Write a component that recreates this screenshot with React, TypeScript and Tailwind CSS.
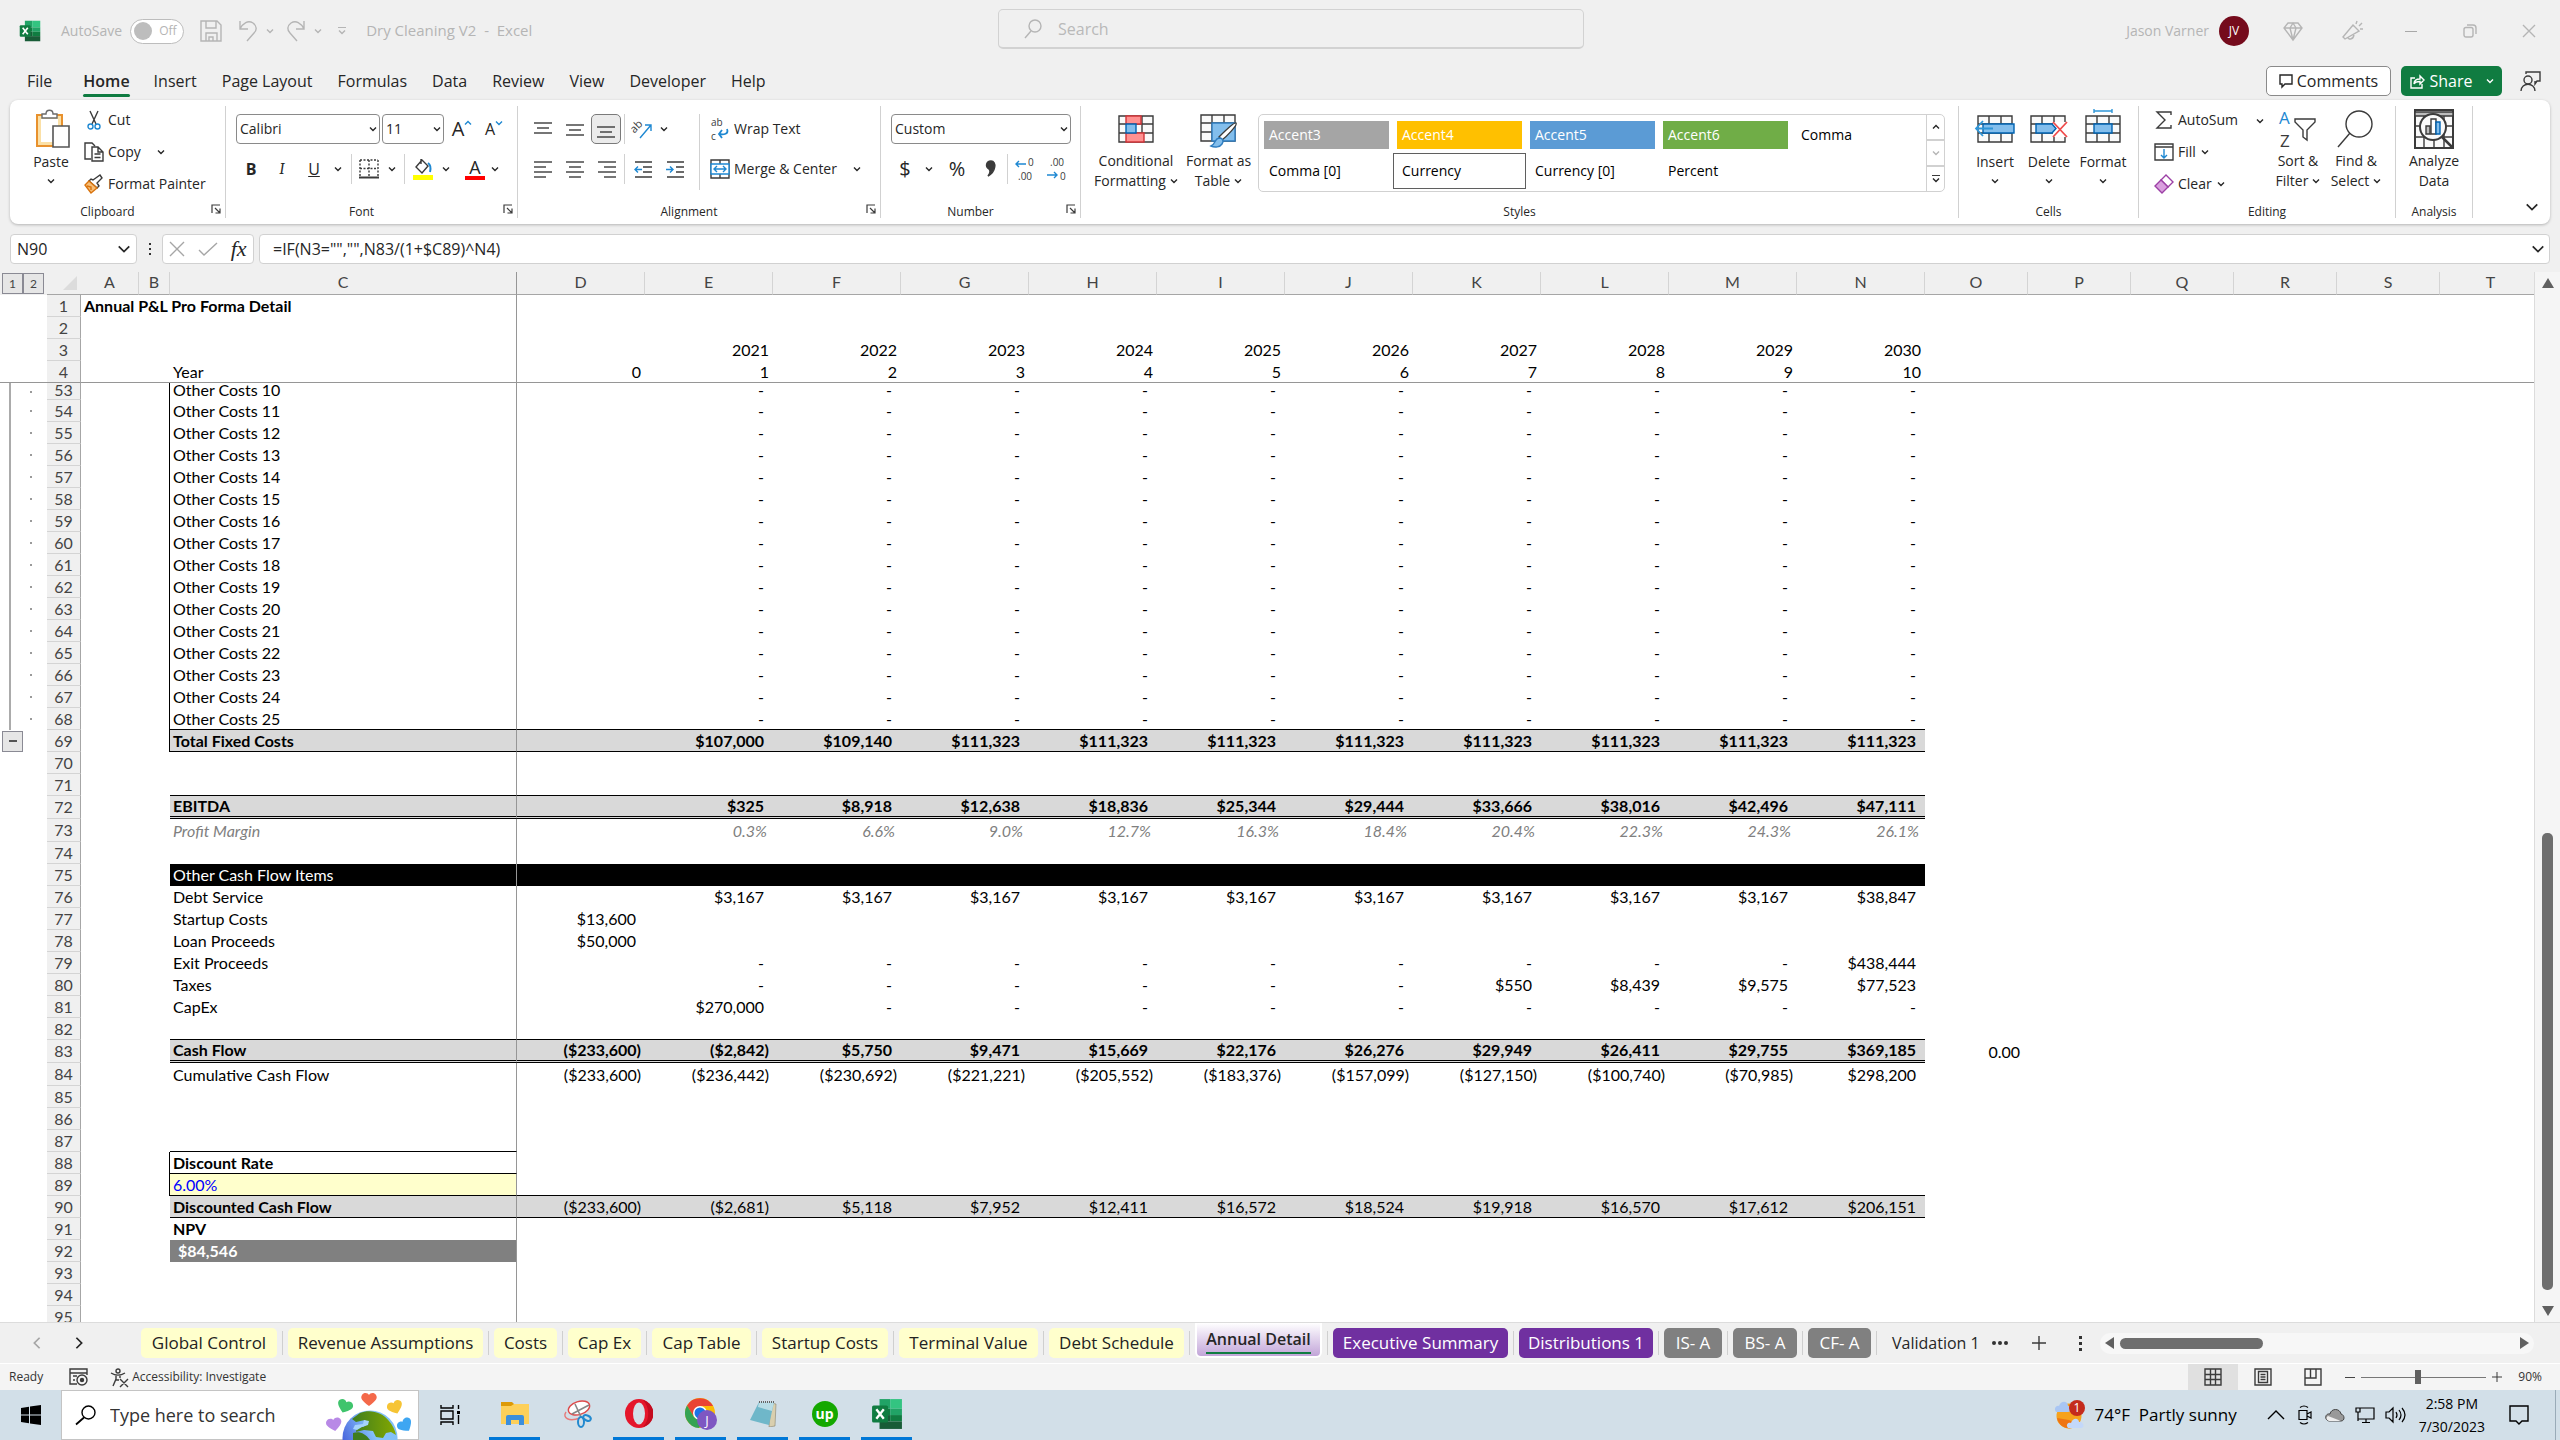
import type { ReactNode } from "react";
import clsx from "clsx";

const years = ["2021", "2022", "2023", "2024", "2025", "2026", "2027", "2028", "2029", "2030"];
const dashes = Array<string>(10).fill("-");

type Kind = "plain" | "total" | "double" | "section" | "margin" | "discounted";

interface SheetRow {
  n: number;
  label?: string;
  values?: string[];
  kind?: Kind;
}

// values are listed for columns D to N
const frozenRows: SheetRow[] = [
  { n: 1 },
  { n: 2 },
  { n: 3, values: ["", ...years] },
  { n: 4, label: "Year", values: ["0", "1", "2", "3", "4", "5", "6", "7", "8", "9", "10"] },
];

const bodyRows: SheetRow[] = [
  ...Array.from({ length: 16 }, (_, i) => ({
    n: 53 + i,
    label: `Other Costs ${10 + i}`,
    values: ["", ...dashes],
  })),
  {
    n: 69,
    label: "Total Fixed Costs",
    kind: "total",
    values: ["", "$107,000", "$109,140", "$111,323", "$111,323", "$111,323", "$111,323", "$111,323", "$111,323", "$111,323", "$111,323"],
  },
  { n: 70 },
  { n: 71 },
  {
    n: 72,
    label: "EBITDA",
    kind: "double",
    values: ["", "$325", "$8,918", "$12,638", "$18,836", "$25,344", "$29,444", "$33,666", "$38,016", "$42,496", "$47,111"],
  },
  {
    n: 73,
    label: "Profit Margin",
    kind: "margin",
    values: ["", "0.3%", "6.6%", "9.0%", "12.7%", "16.3%", "18.4%", "20.4%", "22.3%", "24.3%", "26.1%"],
  },
  { n: 74 },
  { n: 75, label: "Other Cash Flow Items", kind: "section" },
  {
    n: 76,
    label: "Debt Service",
    values: ["", "$3,167", "$3,167", "$3,167", "$3,167", "$3,167", "$3,167", "$3,167", "$3,167", "$3,167", "$38,847"],
  },
  { n: 77, label: "Startup Costs", values: ["$13,600"] },
  { n: 78, label: "Loan Proceeds", values: ["$50,000"] },
  { n: 79, label: "Exit Proceeds", values: ["", ...dashes.slice(1), "$438,444"] },
  { n: 80, label: "Taxes", values: ["", "-", "-", "-", "-", "-", "-", "$550", "$8,439", "$9,575", "$77,523"] },
  { n: 81, label: "CapEx", values: ["", "$270,000", ...dashes.slice(1)] },
  { n: 82 },
  {
    n: 83,
    label: "Cash Flow",
    kind: "double",
    values: ["($233,600)", "($2,842)", "$5,750", "$9,471", "$15,669", "$22,176", "$26,276", "$29,949", "$26,411", "$29,755", "$369,185", "0.00"],
  },
  {
    n: 84,
    label: "Cumulative Cash Flow",
    values: ["($233,600)", "($236,442)", "($230,692)", "($221,221)", "($205,552)", "($183,376)", "($157,099)", "($127,150)", "($100,740)", "($70,985)", "$298,200"],
  },
  { n: 85 },
  { n: 86 },
  { n: 87 },
  { n: 88, label: "Discount Rate" },
  { n: 89, label: "6.00%" },
  {
    n: 90,
    label: "Discounted Cash Flow",
    kind: "discounted",
    values: ["($233,600)", "($2,681)", "$5,118", "$7,952", "$12,411", "$16,572", "$18,524", "$19,918", "$16,570", "$17,612", "$206,151"],
  },
  { n: 91, label: "NPV" },
  { n: 92, label: "$84,546" },
  { n: 93 },
  { n: 94 },
  { n: 95 },
];

const Chevron = ({ size = 8, className = "" }: { size?: number; className?: string }) => (
  <svg width={size} height={size} viewBox="0 0 8 8" fill="none" stroke="currentColor" strokeWidth={size > 8 ? 1 : 1.4} className={clsx("shrink-0", className)}>
    <path d="M1 2.5 4 5.5 7 2.5" />
  </svg>
);

const Svg = ({ w, h, children, className }: { w: number; h: number; children: ReactNode; className?: string }) => (
  <svg width={w} height={h} viewBox={`0 0 ${w} ${h}`} fill="none" stroke="#3b3b3b" strokeWidth="1.4" className={clsx("shrink-0 overflow-visible", className)}>
    {children}
  </svg>
);

const ExcelIcon = ({ size }: { size: number }) => (
  <svg width={size} height={size} viewBox="0 0 30 30" className="shrink-0">
    <path d="M8 1h10v9H8z" fill="#21a366" />
    <path d="M18 1h11v9H18z" fill="#33c481" />
    <path d="M8 10h10v6H8z" fill="#107c41" />
    <path d="M18 10h11v6H18z" fill="#21a366" />
    <path d="M8 16h10v6H8z" fill="#185c37" />
    <path d="M18 16h11v6H18z" fill="#107c41" />
    <path d="M8 22h21v7H8z" fill="#185c37" />
    <rect x="1" y="7" width="15" height="16" rx="1.5" fill="#107c41" />
    <path d="m5 10.500 7 9M12 10.500l-7 9" stroke="#fff" strokeWidth="2.200" />
  </svg>
);

const Launcher = ({ label }: { label: string }) => (
  <button aria-label={label} className="absolute right-1 bottom-1">
    <Svg w={10} h={10}>
      <path d="M1 9V1h8M4 4l5 5M9 4.500V9H4.500" strokeWidth="1.200" />
    </Svg>
  </button>
);

const Group = ({ title, className, children, launcher }: { title: string; className: string; children: ReactNode; launcher?: boolean }) => (
  <section aria-label={title} className={clsx("relative flex h-[112px] shrink-0 flex-col border-r border-[#d1d1d1]", className)}>
    <div className="flex h-24 items-start">{children}</div>
    <div className={clsx("h-4 text-center text-xs leading-[20px]", launcher && "pr-5")}>{title}</div>
    {launcher && <Launcher label={`${title} settings`} />}
  </section>
);

const IconButton = ({ label, className = "w-8", children }: { label: string; className?: string; children: ReactNode }) => (
  <button aria-label={label} className={clsx("flex h-[30px] shrink-0 items-center justify-center", className)}>
    {children}
  </button>
);

const Divider = ({ className = "h-[30px]" }: { className?: string }) => <span className={clsx("w-px shrink-0 bg-[#d1d1d1]", className)} />;

const TextButton = ({ icon, label, chevron, className = "" }: { icon: ReactNode; label: string; chevron?: boolean; className?: string }) => (
  <button className={clsx("flex items-center gap-[5px] text-sm whitespace-nowrap", className)}>
    <span className="flex w-[18px] shrink-0 justify-center">{icon}</span>
    {label}
    {chevron && <Chevron />}
  </button>
);

const BigButton = ({ icon, lines, chevron, className }: { icon: ReactNode; lines: string[]; chevron?: "inline" | "below"; className: string }) => (
  <button className={clsx("flex shrink-0 flex-col items-center text-sm leading-[20px] whitespace-nowrap", className)}>
    <span className="flex h-[45px] items-center">{icon}</span>
    {lines.map((line, i) => (
      <span key={line} className={clsx("flex items-center gap-1", chevron === "below" && "pt-px")}>
        {line}
        {chevron === "inline" && i === lines.length - 1 && <Chevron />}
      </span>
    ))}
    {chevron === "below" && <Chevron className="mt-[5px]" />}
  </button>
);

const Select = ({ label, value, className }: { label: string; value: string; className: string }) => (
  <div className={clsx("relative h-[30px] shrink-0", className)}>
    <select aria-label={label} className="h-full w-full appearance-none rounded-[4px] border border-[#8a8a8a] bg-white pl-[3px] text-sm">
      <option>{value}</option>
    </select>
    <Chevron className="pointer-events-none absolute top-[11px] right-[3px]" />
  </div>
);

const Lines = ({ rows }: { rows: [number, number, number][] }) => (
  <Svg w={18} h={18}>
    {rows.map(([x1, x2, y]) => (
      <path key={y} d={`M${x1} ${y}H${x2}`} />
    ))}
  </Svg>
);

const GridBase = () => (
  <g>
    <path d="M1 1h34v26H1z" fill="#fafafa" />
    <path d="M12 1v26M24 1v26M1 9h34M1 18h34" />
  </g>
);

const TitleBar = () => (
  <header className="flex h-[62px] shrink-0 items-center text-[#b5b5b5]">
    <div className="flex flex-[979] basis-0 items-center gap-3 pl-[19px] text-sm">
      <ExcelIcon size={22} />
      <label className="ml-2 flex items-center gap-2">
        AutoSave
        <button role="switch" aria-checked="false" aria-label="AutoSave" className="flex h-[25px] w-[54px] items-center gap-[7px] rounded-full border border-[#bdbdbd] bg-white pl-[3px] text-xs">
          <span className="size-[18px] rounded-full bg-[#bdbdbd]" />
          Off
        </button>
      </label>
      <button aria-label="Save" className="ml-1">
        <Svg w={22} h={22}>
          <g stroke="#b5b5b5">
            <path d="M1 1h16l4 4v16H1zM6 1v7h10V1M6 21v-8h11v8M9 21v-4h4v4" />
          </g>
        </Svg>
      </button>
      <button aria-label="Undo" className="ml-1 flex items-center gap-2">
        <Svg w={20} h={22}>
          <path d="M2 1v8h8M2 9C5 3 10 0 15 3c4 3 4 7 1 10l-7 8" stroke="#b5b5b5" />
        </Svg>
        <Chevron />
      </button>
      <button aria-label="Redo" className="flex items-center gap-2">
        <Svg w={20} h={22}>
          <path d="M18 1v8h-8M18 9C15 3 10 0 5 3 1 6 1 10 4 13l7 8" stroke="#b5b5b5" />
        </Svg>
        <Chevron />
      </button>
      <button aria-label="Customize Quick Access Toolbar" className="ml-1 flex flex-col items-center">
        <span className="h-px w-2 bg-[#b5b5b5]" />
        <Chevron />
      </button>
      <span className="ml-2 text-[15px] whitespace-pre">Dry Cleaning V2  -  Excel</span>
    </div>
    <label className="mb-1 flex h-10 w-[586px] shrink-0 items-center gap-4 rounded-[5px] border border-b-2 border-[#d2d2d2] pl-[25px]">
      <Svg w={18} h={20}>
        <circle cx="11" cy="7" r="6" stroke="#b5b5b5" />
        <path d="m7 12-6 7" stroke="#b5b5b5" />
      </Svg>
      <input type="search" placeholder="Search" aria-label="Search" className="flex-1 bg-transparent text-base placeholder:text-[#b9b9b9]" />
    </label>
    <div className="flex flex-[974] basis-0 items-center justify-end pr-[2px] text-sm">
      Jason Varner
      <span className="ml-[10px] mr-[14px] flex size-[30px] items-center justify-center rounded-full bg-[#750b1c] text-xs text-white">JV</span>
      <IconButton label="Premium" className="w-[59px]">
        <Svg w={20} h={20}>
          <path d="M5 2h10l4 5-9 12L1 7zM1 7h18M10 2 7 7l3 12 3-12z" stroke="#b5b5b5" />
        </Svg>
      </IconButton>
      <IconButton label="What's new" className="w-[59px]">
        <Svg w={22} h={22}>
          <path d="m12 5 6 6L4 19l-2-2zM7 17c0 3 5 3 6-2M15 4l1-3M18 6l3-3M19 9h3" stroke="#b5b5b5" />
        </Svg>
      </IconButton>
      <IconButton label="Minimize" className="w-[59px]">
        <span className="h-px w-3 bg-[#a8a8a8]" />
      </IconButton>
      <IconButton label="Restore" className="w-[59px]">
        <Svg w={14} h={14}>
          <rect x="1" y="3.500" width="9" height="9.500" rx="2" stroke="#b5b5b5" />
          <path d="M4 1h6q3 0 3 3v6" stroke="#b5b5b5" />
        </Svg>
      </IconButton>
      <IconButton label="Close" className="w-[59px]">
        <Svg w={14} h={14}>
          <path d="m1 1 12 12M13 1 1 13" stroke="#b5b5b5" />
        </Svg>
      </IconButton>
    </div>
  </header>
);

const menu = ["File", "Home", "Insert", "Page Layout", "Formulas", "Data", "Review", "View", "Developer", "Help"];

const MenuBar = () => (
  <nav className="flex h-[38px] shrink-0 items-center pl-[15px] pr-[19px] text-base">
    {menu.map((item) => (
      <button key={item} className={clsx("relative h-[38px] px-3", item === "File" ? "mr-[7px]" : item !== "Home" && "mr-px", item === "Home" && "font-semibold")}>
        {item}
        {item === "Home" && <span className="absolute bottom-[3px] left-3 right-3 h-[3px] rounded-full bg-[#0f7b41]" />}
      </button>
    ))}
    <button className="ml-auto flex h-[30px] w-[125px] items-center justify-center gap-1 rounded-[5px] border border-[#8a8a8a] bg-white">
      <Svg w={14} h={14}>
        <path d="M1 1h12v9H6l-3 3v-3H1z" stroke="#262626" />
      </Svg>
      Comments
    </button>
    <button className="ml-[10px] flex h-[30px] w-[101px] items-center justify-center gap-[5px] rounded-[5px] bg-[#107c41] font-medium text-white">
      <Svg w={15} h={15}>
        <path d="M5 4H1v10h11v-4M4 10c0-4 3-5 6-5V2l4 4-4 4V7.500C7 7.500 5 8 4 10z" stroke="#fff" />
      </Svg>
      Share
      <Chevron className="ml-2" />
    </button>
    <button aria-label="Presence" className="ml-[18px]">
      <Svg w={21} h={21}>
        <circle cx="8" cy="9" r="4" />
        <path d="M1 20c0-9 14-9 14 0M6 3V1h14v9h-3l-2 3v-3" />
      </Svg>
    </button>
  </nav>
);

const ClipboardGroup = () => (
  <Group title="Clipboard" className="w-[216px]" launcher>
    <BigButton
      className="w-[75px] pl-[7px]"
      chevron="below"
      lines={["Paste"]}
      icon={
        <Svg w={36} h={40} className="ml-[3px]">
          <path d="M2 6h25v31H2z" fill="#fbe0a6" stroke="#e8912d" strokeWidth="2" />
          <path d="M6 10h17v23H6z" fill="#fff" stroke="none" />
          <path d="M7 9V5h4c0-5 7-5 7 0h4v4z" fill="#fff" stroke="#6b6b6b" />
          <path d="M18 17h16v21H18z" fill="#fff" stroke="#555" strokeWidth="1.600" />
        </Svg>
      }
    />
    <div className="flex flex-col">
      <TextButton
        className="h-8 -mt-[2px]"
        label="Cut"
        icon={
          <Svg w={14} h={20}>
            <path d="m3 1 6 13M11 1 5 14" />
            <circle cx="3.500" cy="16.500" r="2.500" stroke="#1e88d2" />
            <circle cx="10.500" cy="16.500" r="2.500" stroke="#1e88d2" />
          </Svg>
        }
      />
      <div className="flex items-center gap-4">
        <TextButton
          className="h-8"
          label="Copy"
          icon={
            <Svg w={20} h={20}>
              <path d="M7 17H1V1h7l3 3" />
              <path d="M8 5h6l5 5v9H8zM14 5v5h5M10.500 12h6M10.500 15.500h6" />
            </Svg>
          }
        />
        <Chevron />
      </div>
      <TextButton
        className="h-8"
        label="Format Painter"
        icon={
          <Svg w={20} h={20}>
            <path d="m9 6 7-5 2 3-5 5 2 3-2 2-8-7 2-2z" />
            <path d="m5 7 8 7-6 5-6-8z" fill="#f6bd76" stroke="#d9730d" />
            <path d="m3 12 4 1 0 3" stroke="#d9730d" />
          </Svg>
        }
      />
    </div>
  </Group>
);

const FontGroup = () => (
  <Group title="Font" className="w-[292px]" launcher>
    <div className="flex flex-col gap-[10px] pt-2 pl-[10px]">
      <div className="flex items-center">
        <Select label="Font name" value="Calibri" className="w-[144px]" />
        <Select label="Font size" value="11" className="ml-[2px] w-[62px]" />
        <IconButton label="Increase font size" className="ml-[2px] w-8">
          <span className="text-xl leading-none">A</span>
          <Chevron className="mb-3 rotate-180 text-[#1e88d2]" />
        </IconButton>
        <IconButton label="Decrease font size">
          <span className="text-base leading-none">A</span>
          <Chevron className="mb-3 text-[#1e88d2]" />
        </IconButton>
      </div>
      <div className="flex items-center text-base">
        <IconButton label="Bold" className="w-[30px]">
          <b>B</b>
        </IconButton>
        <IconButton label="Italic">
          <i className="font-serif">I</i>
        </IconButton>
        <IconButton label="Underline">
          <u>U</u>
        </IconButton>
        <Chevron className="mx-1" />
        <Divider className="ml-[5px] h-[30px]" />
        <IconButton label="Borders" className="ml-[3px] w-7">
          <Svg w={20} h={20}>
            <path d="M1 1h18M1 1v16M19 1v16M10 1v16M1 9.500h18" strokeDasharray="2 1.500" />
            <path d="M0 18.500h20" strokeWidth="2" />
          </Svg>
        </IconButton>
        <Chevron className="mx-[5px]" />
        <Divider className="ml-[3px] h-[30px]" />
        <IconButton label="Fill color" className="ml-1 w-7">
          <Svg w={20} h={22}>
            <path d="m3 9 6-7 6 6-6 7zM8 1v5" />
            <path d="M15 5c3 2 3 5 2 9" stroke="#1e88d2" strokeWidth="2" />
            <path d="M0 17h20v5H0z" fill="#ff0" stroke="none" />
          </Svg>
        </IconButton>
        <Chevron className="mx-[5px]" />
        <IconButton label="Font color" className="ml-1 w-8">
          <span className="flex flex-col items-center">
            <span className="text-lg leading-[18px]">A</span>
            <span className="h-1 w-5 bg-[#f00]" />
          </span>
        </IconButton>
        <Chevron />
      </div>
    </div>
  </Group>
);

const AlignmentGroup = () => (
  <Group title="Alignment" className="w-[363px]" launcher>
    <div className="flex flex-col gap-[10px] pt-2 pl-[9px]">
      <div className="flex items-center">
        <IconButton label="Top align">
          <Lines rows={[[0, 18, 3], [3, 15, 8], [0, 18, 13]]} />
        </IconButton>
        <IconButton label="Middle align">
          <Lines rows={[[0, 18, 5], [3, 15, 10], [0, 18, 15]]} />
        </IconButton>
        <IconButton label="Bottom align" className="w-[30px] rounded-[5px] border border-[#7a7a7a] bg-[#ebebeb]">
          <Lines rows={[[0, 18, 7], [3, 15, 12], [0, 18, 17]]} />
        </IconButton>
        <Divider className="ml-[3px] h-[30px]" />
        <IconButton label="Orientation" className="ml-[3px] w-7">
          <Svg w={22} h={22}>
            <text x="0" y="12" fontSize="11" fill="#3b3b3b" stroke="none" transform="rotate(-45 6 10)">ab</text>
            <path d="M9 20 20 7M14 7h6v6" stroke="#1e88d2" />
          </Svg>
        </IconButton>
        <Chevron className="mx-1" />
      </div>
      <div className="flex items-center">
        <IconButton label="Align left">
          <Lines rows={[[0, 18, 2], [0, 12, 7], [0, 18, 12], [0, 12, 17]]} />
        </IconButton>
        <IconButton label="Center">
          <Lines rows={[[0, 18, 2], [3, 15, 7], [0, 18, 12], [3, 15, 17]]} />
        </IconButton>
        <IconButton label="Align right">
          <Lines rows={[[0, 18, 2], [6, 18, 7], [0, 18, 12], [6, 18, 17]]} />
        </IconButton>
        <Divider className="ml-px h-[30px]" />
        <IconButton label="Decrease indent" className="ml-[2px] w-8">
          <Svg w={18} h={18}>
            <path d="M1 2h17M9 7h9M9 12h9M1 17h17" />
            <path d="M8 9.500H1M4 6.500 1 9.500l3 3" stroke="#1e88d2" />
          </Svg>
        </IconButton>
        <IconButton label="Increase indent">
          <Svg w={18} h={18}>
            <path d="M1 2h17M10 7h8M10 12h8M1 17h17" />
            <path d="M0 9.500h7M4 6.500l3 3-3 3" stroke="#1e88d2" />
          </Svg>
        </IconButton>
      </div>
    </div>
    <Divider className="mt-2 ml-2 h-[76px]" />
    <div className="flex flex-col gap-[10px] pt-2 pl-[11px]">
      <TextButton
        className="h-[30px]"
        label="Wrap Text"
        icon={
          <Svg w={18} h={22}>
            <text x="0" y="8" fontSize="10" fill="#3b3b3b" stroke="none">ab</text>
            <text x="0" y="22" fontSize="10" fill="#3b3b3b" stroke="none">c</text>
            <path d="M16 11c2 5-3 6-8 5M11 12l-3 4 3 4" stroke="#1e88d2" strokeWidth="1.800" />
          </Svg>
        }
      />
      <div className="flex items-center gap-4">
        <TextButton
          className="h-[30px]"
          label="Merge & Center"
          icon={
            <Svg w={20} h={20}>
              <path d="M1 1h18v18H1zM10 1v4M10 15v4" />
              <path d="M1 5h18v10H1z" fill="#fff" stroke="#1e88d2" />
              <path d="M4 10h12M7 7l-3 3 3 3M13 7l3 3-3 3" stroke="#1e88d2" />
            </Svg>
          }
        />
        <Chevron />
      </div>
    </div>
  </Group>
);

const NumberGroup = () => (
  <Group title="Number" className="w-[200px]" launcher>
    <div className="flex flex-col gap-[10px] pt-2 pl-[10px]">
      <Select label="Number format" value="Custom" className="w-[180px]" />
      <div className="flex items-center text-xl">
        <IconButton label="Accounting format" className="w-7">$</IconButton>
        <Chevron className="mx-[6px]" />
        <IconButton label="Percent style" className="ml-[2px] w-8">%</IconButton>
        <IconButton label="Comma style" className="ml-1 w-7">
          <Svg w={10} h={18}>
            <path d="M5 1c6 0 5 11-3 15 3-4 2-6 1-7-4-2-3-8 2-8z" fill="#3b3b3b" />
          </Svg>
        </IconButton>
        <Divider className="ml-[2px] h-[30px]" />
        <IconButton label="Increase decimal" className="ml-px w-8">
          <Svg w={20} h={22}>
            <text x="13" y="8" fontSize="10" fill="#3b3b3b" stroke="none">0</text>
            <text x="3" y="22" fontSize="10" fill="#3b3b3b" stroke="none">.00</text>
            <path d="M11 6H1M4 3 1 6l3 3" stroke="#1e88d2" />
          </Svg>
        </IconButton>
        <IconButton label="Decrease decimal">
          <Svg w={20} h={22}>
            <text x="3" y="8" fontSize="10" fill="#3b3b3b" stroke="none">.00</text>
            <text x="13" y="22" fontSize="10" fill="#3b3b3b" stroke="none">0</text>
            <path d="M0 17h10M7 14l3 3-3 3" stroke="#1e88d2" />
          </Svg>
        </IconButton>
      </div>
    </div>
  </Group>
);

const cellStyles = [
  { name: "Accent3", className: "bg-[#a5a5a5] text-white" },
  { name: "Accent4", className: "bg-[#ffc000] text-white" },
  { name: "Accent5", className: "bg-[#5b9bd5] text-white" },
  { name: "Accent6", className: "bg-[#70ad47] text-white" },
  { name: "Comma", className: "text-black" },
  { name: "Comma [0]", className: "text-black" },
  { name: "Currency", className: "text-black outline outline-[#5f5f5f] outline-offset-3" },
  { name: "Currency [0]", className: "text-black" },
  { name: "Percent", className: "text-black" },
];

const StylesGroup = () => (
  <Group title="Styles" className="min-w-[878px] flex-1">
    <BigButton
      className="ml-3 w-[86px]"
      chevron="inline"
      lines={["Conditional", "Formatting"]}
      icon={
        <Svg w={36} h={28}>
          <GridBase />
          <path d="M8 1h15v8H8zM8 18h18v9H8z" fill="#ff9191" stroke="#d13438" />
          <path d="M8 9h10v9H8z" fill="#83beec" stroke="#0063b1" />
        </Svg>
      }
    />
    <BigButton
      className="w-[79px]"
      chevron="inline"
      lines={["Format as", "Table"]}
      icon={
        <Svg w={38} h={34} className="mt-[5px]">
          <GridBase />
          <path d="M12 9h23v18H12z" fill="#83beec" stroke="#2f7dc0" />
          <path d="M36 9c2 2-10 14-14 17l-3-3C24 18 34 8 36 9z" fill="#fff" />
          <path d="M19 24c4 0 5 3 3 6s-7 4-11 2c5-2 3-7 8-8z" fill="#83beec" stroke="#2f7dc0" />
        </Svg>
      }
    />
    <div className="mt-2 flex h-[78px] flex-1 overflow-hidden rounded-[5px] border border-[#d1d1d1]">
      <div className="grid w-[662px] grid-cols-5 content-start gap-x-2 gap-y-2 py-[6px] pl-[5px]">
        {cellStyles.map((s) => (
          <button key={s.name} className={clsx("h-7 pl-[5px] text-left text-sm whitespace-nowrap", s.className)}>
            {s.name}
          </button>
        ))}
      </div>
      <div className="ml-auto flex w-[18px] flex-col divide-y-2 divide-[#d1d1d1] border-l border-[#d1d1d1]">
        <button aria-label="Previous styles" className="flex flex-1 items-center justify-center">
          <Chevron className="rotate-180" />
        </button>
        <button aria-label="Next styles" className="flex flex-1 items-center justify-center text-[#b5b5b5]">
          <Chevron />
        </button>
        <button aria-label="More styles" className="flex flex-1 flex-col items-center justify-center">
          <span className="h-px w-2 bg-[#3b3b3b]" />
          <Chevron />
        </button>
      </div>
    </div>
    <span className="w-[13px]" />
  </Group>
);

const CellsGroup = () => (
  <Group title="Cells" className="w-[180px]">
    <BigButton
      className="ml-[9px] w-[54px]"
      chevron="below"
      lines={["Insert"]}
      icon={
        <Svg w={40} h={28}>
          <g transform="translate(2 0)">
            <GridBase />
          </g>
          <path d="M8 9h31v9H8z" fill="#83beec" stroke="#0063b1" />
          <path d="M18 13.500H1M8 6l-7 7.500L8 21" stroke="#2f96d8" strokeWidth="1.800" />
        </Svg>
      }
    />
    <BigButton
      className="w-[54px]"
      chevron="below"
      lines={["Delete"]}
      icon={
        <Svg w={38} h={28}>
          <GridBase />
          <path d="M23 7h14v15H23z" fill="#fff" stroke="none" />
          <path d="M6 9h16l4 4.500-4 4.500H6z" fill="#83beec" stroke="#0063b1" />
          <path d="m23 7 14 15M37 7 23 22" stroke="#f04b4b" strokeWidth="1.800" />
        </Svg>
      }
    />
    <BigButton
      className="w-[54px]"
      chevron="below"
      lines={["Format"]}
      icon={
        <Svg w={36} h={34} className="mb-[6px]">
          <g transform="translate(0 6)">
            <GridBase />
            <path d="M9 9h18v9H9z" fill="#83beec" stroke="#0063b1" />
          </g>
          <path d="M9 2h18M9 0v4M27 0v4" stroke="#2f96d8" />
        </Svg>
      }
    />
  </Group>
);

const EditingGroup = () => (
  <Group title="Editing" className="w-[257px]">
    <div className="flex w-[130px] flex-col pr-[5px] pl-4">
      <div className="flex items-center justify-between">
        <TextButton
          className="h-8 -mt-[2px]"
          label="AutoSum"
          icon={
            <Svg w={16} h={18}>
              <path d="M15 4V1H1l8 8-8 8h14v-3" />
            </Svg>
          }
        />
        <Chevron />
      </div>
      <TextButton
        className="h-8"
        label="Fill"
        chevron
        icon={
          <Svg w={20} h={18}>
            <path d="M1 1h18v16H1zM1 4h18" />
            <path d="M10 6v9M7 12l3 3 3-3" stroke="#1e88d2" />
          </Svg>
        }
      />
      <TextButton
        className="h-8"
        label="Clear"
        chevron
        icon={
          <Svg w={20} h={20}>
            <path d="m12 1 7 7-5 5-7-7z" stroke="#9c3fa5" />
            <path d="m7 6 7 7-6 6-7-7z" fill="#d9a0de" stroke="#9c3fa5" />
          </Svg>
        }
      />
    </div>
    <BigButton
      className="w-[58px]"
      chevron="inline"
      lines={["Sort &", "Filter"]}
      icon={
        <Svg w={38} h={38}>
          <text x="0" y="14" fontSize="17" fill="#1e88d2" stroke="none">A</text>
          <text x="1" y="37" fontSize="17" fill="#3b3b3b" stroke="none">Z</text>
          <path d="M16 9h20v3l-8 8v10l-4-3v-7l-8-8z" />
        </Svg>
      }
    />
    <BigButton
      className="w-[58px]"
      chevron="inline"
      lines={["Find &", "Select"]}
      icon={
        <Svg w={38} h={38}>
          <circle cx="22" cy="14" r="13" />
          <path d="M13 23 1 37" />
        </Svg>
      }
    />
  </Group>
);

const AnalysisGroup = () => (
  <Group title="Analysis" className="w-[77px]">
    <BigButton
      className="w-[76px]"
      lines={["Analyze", "Data"]}
      icon={
        <Svg w={40} h={40}>
          <path d="M1 1h38v38H1z" fill="#fafafa" strokeWidth="2" />
          <path d="M1 3h38v4H1z" fill="#bdbdbd" />
          <path d="M1 17h38M1 28h38M10 7v32M20 28v11M30 7v32" />
          <circle cx="19" cy="18" r="13" fill="#fafafa" strokeWidth="2" />
          <path d="M12 17h4v8h-4z" fill="#bdbdbd" />
          <path d="M17 10h5v15h-5z" fill="#fff" />
          <path d="M22 13h4v12h-4z" fill="#83beec" stroke="#0063b1" />
          <path d="m28 28 11 11" strokeWidth="2.500" />
        </Svg>
      }
    />
  </Group>
);

const Ribbon = () => (
  <div className="relative mx-[10px] flex h-[124px] shrink-0 rounded-[8px] bg-white pt-[6px] shadow-[0_1px_3px_rgba(0,0,0,0.25)]">
    <ClipboardGroup />
    <FontGroup />
    <AlignmentGroup />
    <NumberGroup />
    <StylesGroup />
    <CellsGroup />
    <EditingGroup />
    <AnalysisGroup />
    <div className="flex w-[77px] shrink-0 items-end justify-end pr-[11px] pb-[10px]">
      <button aria-label="Collapse ribbon">
        <Chevron size={14} />
      </button>
    </div>
  </div>
);

const FormulaBar = () => (
  <div className="mx-[10px] mt-[10px] mb-2 flex h-[30px] shrink-0 items-center text-base">
    <div className="flex h-full w-[127px] items-center rounded-[4px] border border-[#d1d1d1] bg-white pr-[5px] pl-[6px]">
      <input aria-label="Name box" defaultValue="N90" className="min-w-0 flex-1" />
      <button aria-label="Name list">
        <Chevron size={14} />
      </button>
    </div>
    <span className="flex w-[25px] flex-col items-center gap-[3px]">
      <i className="size-[2px] bg-[#333]" />
      <i className="size-[2px] bg-[#333]" />
      <i className="size-[2px] bg-[#333]" />
    </span>
    <div className="flex h-full w-[92px] items-center justify-around rounded-[4px] border border-[#d1d1d1] bg-white">
      <button aria-label="Cancel">
        <Svg w={16} h={16}>
          <path d="m1 1 14 14M15 1 1 15" stroke="#a6a6a6" />
        </Svg>
      </button>
      <button aria-label="Enter">
        <Svg w={20} h={14}>
          <path d="m1 8 5 5L19 1" stroke="#a6a6a6" />
        </Svg>
      </button>
      <button aria-label="Insert function" className="font-['Liberation_Serif',serif] text-[22px] leading-none italic">
        fx
      </button>
    </div>
    <div className="ml-[5px] flex h-full flex-1 items-center rounded-[4px] border border-[#d1d1d1] bg-white pr-[4px] pl-[13px]">
      <input aria-label="Formula" defaultValue={'=IF(N3="","",N83/(1+$C89)^N4)'} className="flex-1" />
      <button aria-label="Expand formula bar">
        <Chevron size={14} />
      </button>
    </div>
  </div>
);

const wideColumns = ["D", "E", "F", "G", "H", "I", "J", "K", "L", "M", "N"];
const narrowColumns = ["O", "P", "Q", "R", "S", "T"];

const valuePadding = (row: SheetRow, value: string) => {
  if (row.n < 5 || value.endsWith(")")) return "pr-1";
  if (value.endsWith("%")) return "pr-[6px]";
  return "pr-[9px]";
};

// fill and bottom edge shared by columns C to N
const bandClass = (row: SheetRow) =>
  clsx(
    row.kind === "total" && "border-b border-b-black bg-[#d9d9d9] font-bold",
    row.kind === "double" && "border-b-3 border-double border-b-black bg-[#d9d9d9] font-bold",
    row.kind === "section" && "bg-black text-white",
    row.kind === "margin" && "text-[#808080] italic",
    row.kind === "discounted" && "border-b border-b-black bg-[#d9d9d9]",
    [68, 71, 82, 89].includes(row.n) && "border-b border-b-black"
  );

const labelClass = (n: number) =>
  clsx(
    [88, 90, 91].includes(n) && "font-bold",
    [87, 88].includes(n) && "border-b border-b-black",
    n === 89 && "bg-[#ffffcc] text-[#0000ff]",
    n === 92 && "bg-[#808080] font-bold text-white"
  );

const OutlineCells = ({ n }: { n: number }) => {
  if (n === 69) {
    return (
      <td colSpan={2} className="pl-[2px]">
        <button aria-label="Collapse group" className="flex h-[21px] w-[21px] items-center justify-center border border-[#8a8a94] bg-[#e6e6e6]">
          <span className="h-[2px] w-2 bg-[#555]" />
        </button>
      </td>
    );
  }
  const grouped = n >= 53 && n <= 68;
  const pane = n === 4 && "border-b border-b-[#969696]";
  return (
    <>
      <td className={clsx(pane)}>{grouped && <span className={clsx("ml-[9px] block w-[2px] bg-[#ababab]", n === 53 ? "h-[17px]" : "h-[22px]")} />}</td>
      <td className={clsx("align-middle", pane)}>{grouped && <span className="ml-[7px] block size-[2px] bg-[#9a9a9a]" />}</td>
    </>
  );
};

const Row = ({ row }: { row: SheetRow }) => {
  const { n, label, values = [] } = row;
  const tall = [72, 73, 83, 84].includes(n);
  const pane = n === 4 ? "border-b border-b-[#969696]" : "";
  const boxed = (n >= 53 && n <= 69) || n === 88 || n === 89;
  // row 53 is scrolled partly under the frozen pane
  const height = n === 53 ? "h-[17px] align-top leading-[14px]" : tall ? "h-[23px]" : "h-[22px]";

  return (
    <tr className={height}>
      <OutlineCells n={n} />
      <th className={clsx("border-r border-b border-r-[#a6a6a6] bg-[#f0f0f0] text-center font-normal text-[#444]", n === 4 ? "border-b-[#969696]" : "border-b-[#d4d4d4]")}>
        {n}
      </th>
      <td className={clsx("overflow-visible pl-[3px] font-bold whitespace-nowrap", pane)}>{n === 1 && "Annual P&L Pro Forma Detail"}</td>
      <td className={clsx(pane, boxed && "border-r border-r-black")} />
      <td className={clsx("border-r border-r-[#969696] whitespace-nowrap", n === 92 ? "pl-2" : "pl-[3px]", pane, bandClass(row), labelClass(n))}>{label}</td>
      {wideColumns.map((col, i) => (
        <td key={col} className={clsx("text-right", pane, bandClass(row), valuePadding(row, values[i] ?? ""))}>
          {values[i]}
        </td>
      ))}
      {narrowColumns.map((col, i) => (
        <td key={col} className={clsx("pr-2 text-right", pane)}>
          {values[11 + i]}
        </td>
      ))}
    </tr>
  );
};

const Sheet = () => (
  <main className="flex min-h-0 flex-1 border-b border-[#dcdcdc] bg-white">
    <div className="min-w-0 flex-1 overflow-hidden">
      <table className="w-[calc(100%+8px)] table-fixed border-separate border-spacing-0 font-[Lato,'Liberation_Sans',sans-serif] text-base leading-[20px] text-black">
        <colgroup>
          <col className="w-[23px]" />
          <col className="w-6" />
          <col className="w-[34px]" />
          <col className="w-[58px]" />
          <col className="w-[31px]" />
          <col className="w-[347px]" />
          {wideColumns.map((c) => (
            <col key={c} className="w-32" />
          ))}
          {narrowColumns.slice(0, 5).map((c) => (
            <col key={c} className="w-[103px]" />
          ))}
          <col />
        </colgroup>
        <thead>
          <tr className="h-[23px] bg-[#f0f0f0] text-[#444]">
            <th colSpan={2} className="pl-[2px] text-xs font-normal">
              <span className="flex">
                <button className="h-[21px] w-[21px] border border-[#8a8a94] bg-[#e6e6e6]">1</button>
                <button className="h-[21px] w-[21px] border border-[#8a8a94] bg-[#e6e6e6]">2</button>
              </span>
            </th>
            <th className="border-b border-[#a6a6a6] pr-1">
              <svg width="14" height="14" viewBox="0 0 14 14" className="ml-auto">
                <path d="M14 0v14H0z" fill="#dcdcdc" />
              </svg>
            </th>
            {["A", "B", "C", ...wideColumns, ...narrowColumns].map((c) => (
              <th key={c} className={clsx("border-r border-b border-b-[#a6a6a6] pb-[2px] font-normal", c === "C" ? "border-r-[#969696]" : "border-r-[#d4d4d4]")}>
                {c}
              </th>
            ))}
          </tr>
        </thead>
        <tbody>
          {[...frozenRows, ...bodyRows].map((row) => (
            <Row key={row.n} row={row} />
          ))}
        </tbody>
      </table>
    </div>
    <div className="flex w-[26px] shrink-0 flex-col items-center border-l border-[#dcdcdc] bg-[#f5f5f5] py-[6px]">
      <button aria-label="Scroll up">
        <svg width="12" height="10" viewBox="0 0 12 10">
          <path d="M6 0 12 10H0z" fill="#606060" />
        </svg>
      </button>
      <div className="flex w-[11px] flex-1 flex-col">
        <span className="flex-[546]" />
        <span className="flex-[458] rounded-[5px] bg-[#6e6e6e]" />
        <span className="flex-[16]" />
      </div>
      <button aria-label="Scroll down">
        <svg width="12" height="10" viewBox="0 0 12 10">
          <path d="M6 10 12 0H0z" fill="#606060" />
        </svg>
      </button>
    </div>
  </main>
);

const sheetTabs = [
  { name: "Global Control", className: "w-[136px] bg-[#ffffcc]" },
  { name: "Revenue Assumptions", className: "w-[195px] bg-[#ffffcc]" },
  { name: "Costs", className: "w-[63px] bg-[#ffffcc]" },
  { name: "Cap Ex", className: "w-[73px] bg-[#ffffcc]" },
  { name: "Cap Table", className: "w-[99px] bg-[#ffffcc]" },
  { name: "Startup Costs", className: "w-[126px] bg-[#ffffcc]" },
  { name: "Terminal Value", className: "w-[139px] bg-[#ffffcc]" },
  { name: "Debt Schedule", className: "w-[135px] bg-[#ffffcc]" },
  { name: "Annual Detail", className: "w-[127px]" },
  { name: "Executive Summary", className: "w-[175px] bg-[#7030a0] text-white" },
  { name: "Distributions 1", className: "w-[134px] bg-[#7030a0] text-white" },
  { name: "IS- A", className: "w-[58px] bg-[#808080] text-white" },
  { name: "BS- A", className: "w-[64px] bg-[#808080] text-white" },
  { name: "CF- A", className: "w-[63px] bg-[#808080] text-white" },
];

const SheetTabs = () => (
  <div className="flex h-10 shrink-0 items-center text-[17px]">
    <div className="flex w-[141px] shrink-0 items-center gap-[28px] pl-[30px]">
      <button aria-label="Previous sheet" className="text-[#a6a6a6]">
        <Chevron size={14} className="rotate-90" />
      </button>
      <button aria-label="Next sheet">
        <Chevron size={14} className="-rotate-90" />
      </button>
    </div>
    {sheetTabs.map((tab) => (
      <div key={tab.name} className="flex shrink-0 items-center">
        {tab.name === "Annual Detail" ? (
          <button className={clsx("h-[35px] -mt-[6px] rounded-b-[6px] border-2 border-t-0 border-white bg-linear-to-b from-white to-[#c2a5d8] text-base font-semibold whitespace-nowrap", tab.className)}>
            <span className="border-b-2 border-[#107c41] pb-[2px]">{tab.name}</span>
          </button>
        ) : (
          <button className={clsx("h-[30px] rounded-[5px] whitespace-nowrap", !tab.className.includes("text-white") && "text-[#222]", tab.className)}>{tab.name}</button>
        )}
        <span className="mx-[5px] h-6 w-px bg-[#cfcfcf]" />
      </div>
    ))}
    <button className="ml-[10px] w-[91px] shrink-0 text-left text-base whitespace-nowrap">Validation 1</button>
    <button aria-label="More sheets" className="ml-[9px] flex gap-[2px]">
      <i className="size-1 rounded-full bg-[#333]" />
      <i className="size-1 rounded-full bg-[#333]" />
      <i className="size-1 rounded-full bg-[#333]" />
    </button>
    <button aria-label="New sheet" className="ml-[23px]">
      <Svg w={16} h={16}>
        <path d="M8 1v14M1 8h14" />
      </Svg>
    </button>
    <span className="mr-[18px] ml-8 flex flex-col gap-[3px]">
      <i className="size-[3px] bg-[#333]" />
      <i className="size-[3px] bg-[#333]" />
      <i className="size-[3px] bg-[#333]" />
    </span>
    <div className="mr-[26px] flex h-[21px] flex-1 items-center rounded-full bg-[#f7f7f7] px-[5px]">
      <button aria-label="Scroll left">
        <svg width="9" height="12" viewBox="0 0 9 12">
          <path d="M9 0v12L0 6z" fill="#606060" />
        </svg>
      </button>
      <span className="mx-[6px] h-[11px] w-[143px] rounded-full bg-[#6e6e6e]" />
      <button aria-label="Scroll right" className="ml-auto">
        <svg width="9" height="12" viewBox="0 0 9 12">
          <path d="M0 0v12l9-6z" fill="#606060" />
        </svg>
      </button>
    </div>
  </div>
);

const StatusBar = () => (
  <footer className="flex h-[27px] shrink-0 items-center border-t border-white bg-[#f4f4f4] pr-[18px] pl-[9px] text-xs text-[#333]">
    Ready
    <button aria-label="Record macro" className="ml-[26px]">
      <Svg w={19} h={18}>
        <path d="M8 16H1V1h17v6M1 5h17M4 8h4M4 12h2" />
        <circle cx="13" cy="12" r="5" />
        <circle cx="13" cy="12" r="1.500" fill="#3b3b3b" />
      </Svg>
    </button>
    <button className="ml-[22px] flex items-center gap-[3px]">
      <Svg w={19} h={19}>
        <circle cx="8" cy="3" r="2" />
        <path d="M1 5c5 3 9 3 14 0M6 7v4l-3 7M10 7v3M6 12l3 0M10 11l8 8M18 11l-8 8" />
      </Svg>
      Accessibility: Investigate
    </button>
    <button aria-label="Normal view" className="ml-auto flex h-full w-[50px] items-center justify-center bg-[#e0e0e0]">
      <Svg w={18} h={18}>
        <path d="M1 1h16v16H1zM6.500 1v16M11.500 1v16M1 6.500h16M1 11.500h16" />
      </Svg>
    </button>
    <button aria-label="Page layout view" className="flex h-full w-[50px] items-center justify-center">
      <Svg w={18} h={18}>
        <path d="M1 1h16v16H1zM4.500 3.500h9v11h-9zM6.500 6.500h5M6.500 9h5M6.500 11.500h5" />
      </Svg>
    </button>
    <button aria-label="Page break preview" className="flex h-full w-[50px] items-center justify-center">
      <Svg w={18} h={18}>
        <path d="M1 1h16v16H1zM1 10h11V1M6.500 1v9" />
      </Svg>
    </button>
    <button aria-label="Zoom out" className="ml-[7px] h-px w-[10px] bg-[#444]" />
    <input
      type="range"
      aria-label="Zoom"
      defaultValue={45}
      className="mx-[6px] h-4 w-[125px] appearance-none bg-[linear-gradient(#777,#777)] bg-[length:100%_1px] bg-center bg-no-repeat [&::-webkit-slider-thumb]:h-[14px] [&::-webkit-slider-thumb]:w-[6px] [&::-webkit-slider-thumb]:appearance-none [&::-webkit-slider-thumb]:bg-[#606060]"
    />
    <button aria-label="Zoom in">
      <Svg w={10} h={10}>
        <path d="M5 0v10M0 5h10" strokeWidth="1" />
      </Svg>
    </button>
    <button className="ml-4">90%</button>
  </footer>
);

const TaskButton = ({ label, open, children }: { label: string; open?: boolean; children: ReactNode }) => (
  <button aria-label={label} className={clsx("mr-[11px] flex h-[50px] w-[51px] shrink-0 items-center justify-center border-b-3", open ? "border-[#0078d7]" : "border-transparent")}>
    {children}
  </button>
);

const Heart = ({ x, y, r = 0, fill }: { x: number; y: number; r?: number; fill: string }) => (
  <path transform={`translate(${x} ${y}) rotate(${r})`} d="M0 7C-7 2-9-1-7-4c2-3 6-2 7 0 1-2 5-3 7 0 2 3 0 6-7 11z" fill={fill} />
);

const EarthArt = () => (
  <svg width="88" height="49" viewBox="0 0 88 49" className="shrink-0">
    <defs>
      <linearGradient id="sea" x1="0" x2="1" y1="0.5" y2="0">
        <stop offset="0" stopColor="#4a67dd" />
        <stop offset="0.5" stopColor="#86c3fb" />
        <stop offset="1" stopColor="#7fbdf5" />
      </linearGradient>
      <linearGradient id="land" x1="0" x2="1">
        <stop offset="0" stopColor="#3f7d1e" />
        <stop offset="1" stopColor="#84a800" />
      </linearGradient>
    </defs>
    <circle cx="44" cy="47" r="27.500" fill="url(#sea)" />
    <path d="M34 22c10-4 22-1 29 8 4 5 6 9 7 14l-5-3-5 1-3 5-7-1-3-6-9-1-8 2 1-6 6 1 5-3-3-4-9 2-4-3z" fill="url(#land)" />
    <path d="M27 42c6-2 12 0 17 7H27z" fill="#3f7d1e" />
    <path d="M29 34l8-1 1-4 5 1-1 4-6 2-5 3-4-1z" fill="#a5d3fb" />
    <Heart x={43} y={8} fill="#f4694a" />
    <Heart x={19} y={15} r={20} fill="#3fc46c" />
    <Heart x={69} y={16} r={-20} fill="#f6c435" />
    <Heart x={8} y={33} r={-10} fill="#b889e6" />
    <Heart x={79} y={34} r={-35} fill="#3ea6f2" />
  </svg>
);

const Taskbar = () => (
  <div className="flex h-[50px] shrink-0 items-center bg-[#d2dfe8] text-black">
    <button aria-label="Start" className="flex w-[61px] shrink-0 justify-center">
      <svg width="20" height="20" viewBox="0 0 20 20">
        <path d="m0 3 8-1.200V9.500H0zM9 1.600 20 0v9.500H9zM0 10.500h8v7.700L0 17zM9 10.500h11V20L9 18.400z" />
      </svg>
    </button>
    <label className="flex h-full w-[358px] shrink-0 items-center border border-[#c4c4c4] bg-white pl-[13px]">
      <Svg w={21} h={20}>
        <circle cx="13.500" cy="7.500" r="6.500" stroke="#000" />
        <path d="M9 12.500 1 19.500" stroke="#000" strokeWidth="1.800" />
      </Svg>
      <input placeholder="Type here to search" aria-label="Type here to search" className="ml-[14px] min-w-0 flex-1 text-lg placeholder:text-[#333]" />
      <EarthArt />
      <span className="w-[4px]" />
    </label>
    <button aria-label="Task view" className="mr-2 flex w-[62px] shrink-0 justify-center">
      <Svg w={21} h={20}>
        <path d="M1 0v3h12V0M1 6h12v8H1zM1 20v-3h12v3M18.500 0v4M18.500 10v9" stroke="#000" />
        <path d="M17 6h3v3h-3z" fill="#000" stroke="none" />
      </Svg>
    </button>
    <TaskButton label="File Explorer" open>
      <svg width="28" height="24" viewBox="0 0 28 24">
        <path d="M0 0h11l3 3v5H0z" fill="#dd9a07" />
        <path d="M0 4h10l3-2h15v20H0z" fill="#fdd05a" />
        <path d="M5 23V15q0-2 2-2h14q2 0 2 2v8h-5v-5h-8v5z" fill="#3d8fdc" />
      </svg>
    </TaskButton>
    <TaskButton label="Snipping Tool">
      <Svg w={28} h={28}>
        <ellipse cx="16" cy="8" rx="11" ry="6.500" fill="#fff" stroke="#dd4b4b" transform="rotate(-18 16 8)" />
        <path d="M3 12c-4 6 3 10 14 6" stroke="#e57b7b" />
        <path d="m12 4 6 13M26 5 9 14" stroke="#888" strokeWidth="1.600" />
        <ellipse cx="18" cy="22" rx="3" ry="5" stroke="#2289cf" strokeWidth="2" />
        <ellipse cx="24" cy="18" rx="4" ry="2.500" stroke="#2289cf" strokeWidth="2" transform="rotate(25 24 18)" />
      </Svg>
    </TaskButton>
    <TaskButton label="Opera" open>
      <svg width="28" height="29" viewBox="0 0 28 29">
        <ellipse cx="14" cy="14.500" rx="14" ry="14.500" fill="#e5162b" />
        <path d="M18 1c14 4 14 23 0 27 7-7 7-20 0-27z" fill="#c40c1f" />
        <ellipse cx="14" cy="14.500" rx="6" ry="11" fill="#d2dfe8" />
      </svg>
    </TaskButton>
    <TaskButton label="Google Chrome" open>
      <svg width="32" height="32" viewBox="0 0 32 32">
        <circle cx="15" cy="15" r="15" fill="#fbbc05" />
        <path d="M2 7.500A15 15 0 0 1 28 8H15L9 19z" fill="#ea4335" />
        <path d="M2 7.500A15 15 0 0 0 14 30l7-11H9z" fill="#34a353" />
        <circle cx="15" cy="15" r="7" fill="#fff" />
        <circle cx="15" cy="15" r="5.500" fill="#1a73e8" />
        <circle cx="22" cy="22" r="10" fill="#7e57c2" />
        <text x="22" y="27" fontSize="13" textAnchor="middle" fill="#fff">J</text>
      </svg>
    </TaskButton>
    <TaskButton label="Notepad" open>
      <svg width="28" height="26" viewBox="0 0 28 26">
        <path d="m22 2 5 1-1 22-6 1z" fill="#d9cfae" stroke="#7b735a" strokeWidth="0.500" />
        <path d="M10 1h15l-5 23L1 19z" fill="#6fb7c9" />
        <path d="M10 1h15l-2 9-14-4z" fill="#b9dde6" />
        <path d="M10 1h15" stroke="#666" strokeWidth="2" strokeDasharray="1 1" />
      </svg>
    </TaskButton>
    <TaskButton label="Upwork" open>
      <span className="flex size-[26px] items-center justify-center rounded-full bg-[#14a800] text-sm leading-none font-bold text-white">up</span>
    </TaskButton>
    <TaskButton label="Excel" open>
      <ExcelIcon size={32} />
    </TaskButton>
    <button className="ml-auto flex shrink-0 items-center gap-[10px] text-[17px] whitespace-pre">
      <svg width="31" height="31" viewBox="0 0 31 31">
        <circle cx="15" cy="16" r="12.500" fill="#f6a21c" />
        <path d="M3 18c2 8 8 11 14 10l6-4-8-4z" fill="#ee7414" />
        <path d="M2 12c-3-4 1-7 3-6 2-6 9-5 9 0 4 0 4 6 0 6z" fill="#a9c6f3" />
        <path d="M14 28c-3-4 1-6 3-5 2-6 8-5 8-1 5-1 6 6 2 6z" fill="#c3d8fa" />
        <circle cx="23" cy="8" r="8" fill="#c42b1c" />
        <text x="23" y="12" fontSize="12" textAnchor="middle" fill="#fff">1</text>
      </svg>
      74°F  Partly sunny
    </button>
    <div className="ml-[30px] flex shrink-0 items-center gap-[10px]">
      <Svg w={18} h={20}>
        <path d="m1 14 8-8 8 8" stroke="#000" />
      </Svg>
      <Svg w={20} h={20}>
        <path d="M2 5.500h8v9H2zM10 9l4-2v6l-4-2M3 2.500q4-3 8 0M3 17.500q4 3 8 0" stroke="#000" strokeWidth="1.200" transform="translate(2 0)" />
      </Svg>
      <Svg w={20} h={16}>
        <path d="M4 14c-5-1-4-8 1-7 1-6 10-6 11 0 4 1 4 7 0 7z" fill="#999" stroke="#444" strokeWidth="1" />
        <path d="M4 14c-3-1-3-4-1-5l13 5z" fill="#eee" stroke="none" />
      </Svg>
      <Svg w={20} h={18}>
        <path d="M5 2h14v11H3M11 13v4M7 16.500h8M1 2h4v4H1zM3 6v9" stroke="#000" strokeWidth="1.200" />
      </Svg>
      <Svg w={22} h={18}>
        <path d="M1 6h3l4-4v14l-4-4H1zM11 6q2 3 0 6M14 4q4 5 0 10M17 2q6 7 0 14" stroke="#000" strokeWidth="1.200" />
      </Svg>
    </div>
    <time className="ml-3 shrink-0 text-center text-sm leading-[23px]">
      2:58 PM
      <br />
      7/30/2023
    </time>
    <button aria-label="Notifications" className="ml-6 shrink-0">
      <Svg w={20} h={20}>
        <path d="M1 1h18v15h-6l-3 3-3-3H1z" stroke="#000" />
      </Svg>
    </button>
    <span className="ml-[26px] h-full w-[5px] border-l border-[#9aabb8]" />
  </div>
);

export default function App() {
  return (
    <div className="flex h-screen flex-col overflow-hidden bg-[#f0f0f0] font-['Open_Sans','Noto_Sans',sans-serif] text-[#262626]">
      <TitleBar />
      <MenuBar />
      <Ribbon />
      <FormulaBar />
      <Sheet />
      <SheetTabs />
      <StatusBar />
      <Taskbar />
    </div>
  );
}
